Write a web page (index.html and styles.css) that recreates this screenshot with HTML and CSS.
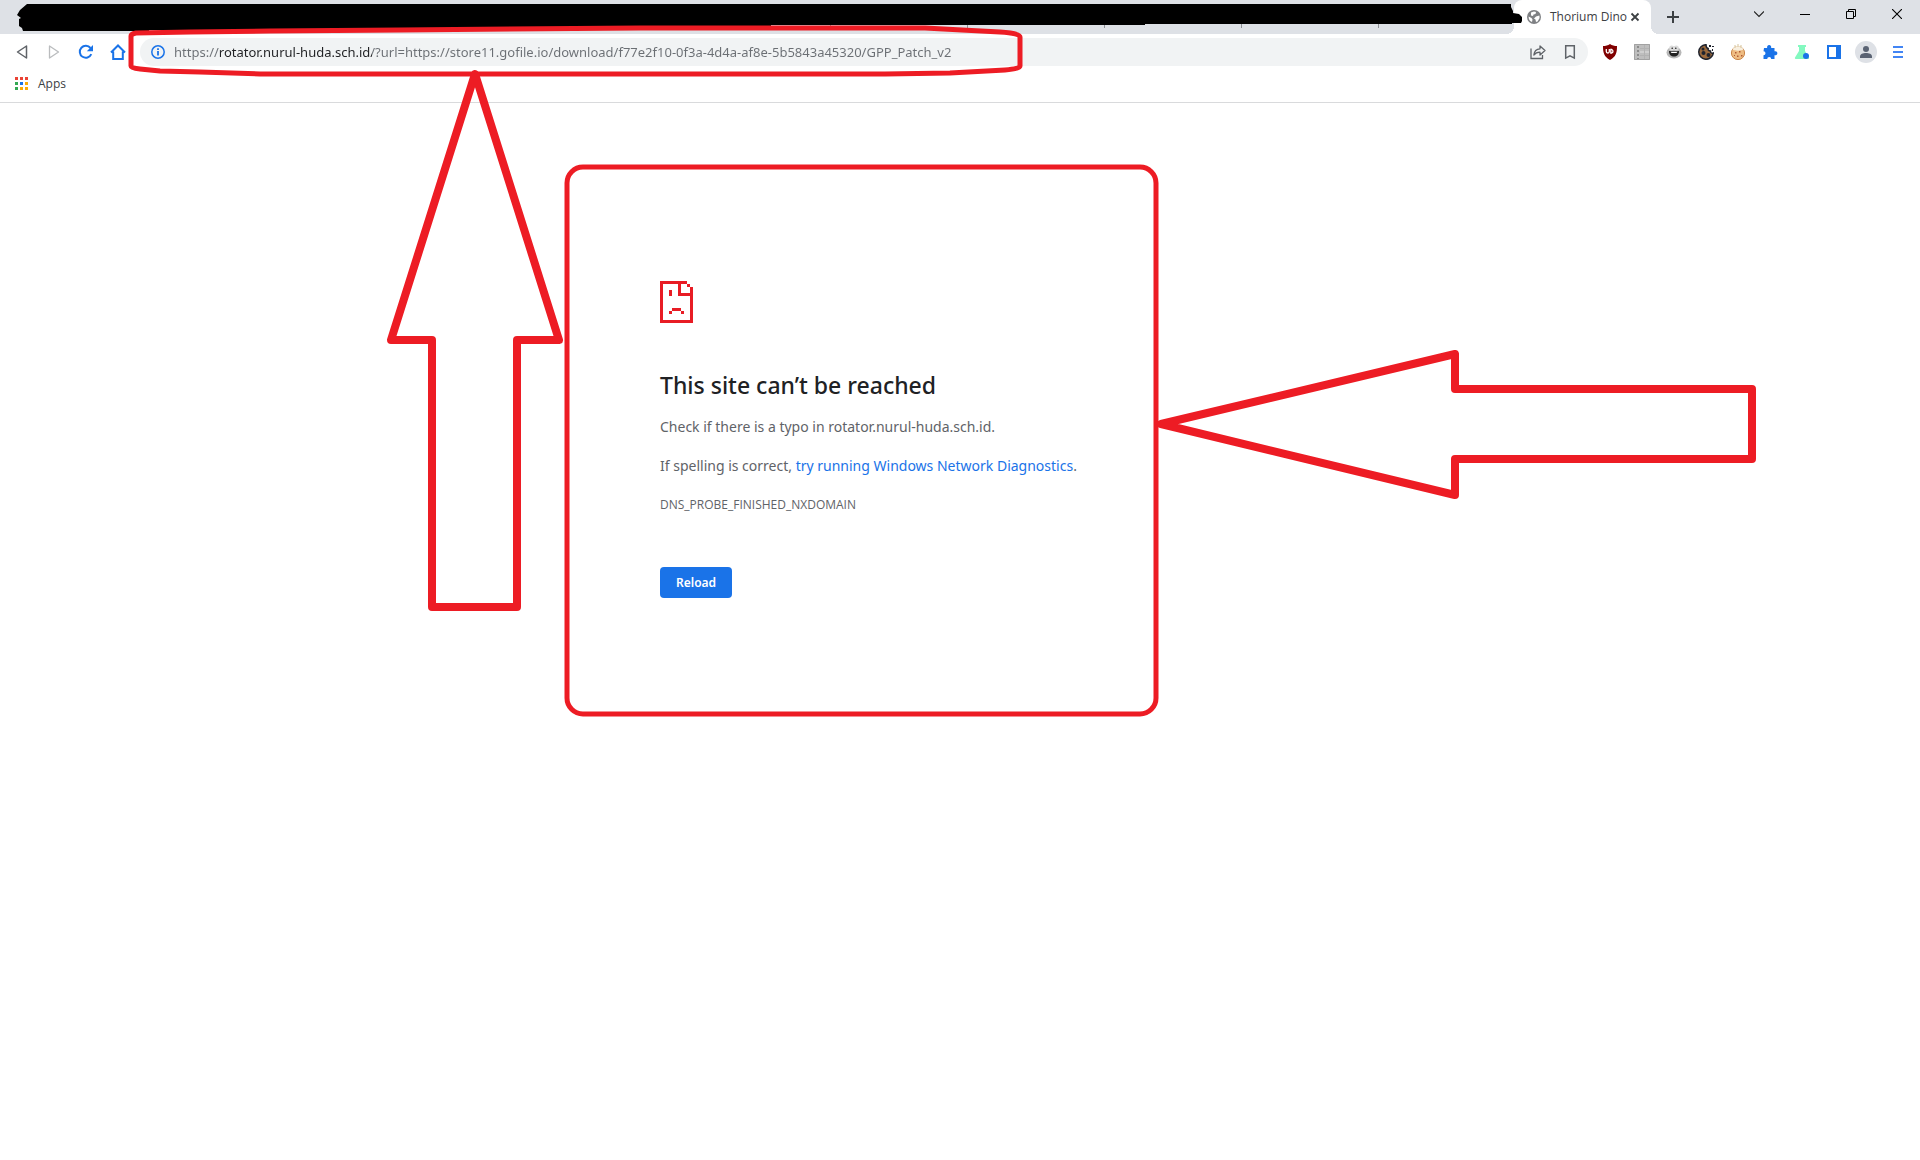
FILE: index.html
```html
<!DOCTYPE html>
<html lang="en">
<head>
<meta charset="utf-8">
<title>Thorium Dino</title>
<link rel="stylesheet" href="styles.css">
</head>
<body>
<div class="window">
  <header class="chrome">
    <div class="tabstrip">
      <div class="hidden-tabs"></div>
      <div class="tab">
        <svg class="i14" viewBox="0 0 14 14"><circle cx="7" cy="7" r="7" fill="#7f8184"/><path d="M1.600 6.500L4.500 8l1 1.500-.5 2.500C3 11.500 1.500 9.500 1.600 6.500zM4 2.500l3-1 2 .5-.5 2-2 .5L6 6 4 5.500zM9 6.500l3.400-1 .2 2.500-2 3.500-1.600.5-.5-2.500-1.500-1z" fill="#fff"/></svg>
        <span class="tab-title">Thorium Dino</span>
        <button class="tab-close" aria-label="Close tab"><svg class="i10" viewBox="0 0 10 10"><path d="M1.500 1.500l7 7M8.500 1.500l-7 7" stroke="#3c4043" stroke-width="1.800"/></svg></button>
      </div>
      <button class="tool new-tab" aria-label="New tab"><svg class="i12" viewBox="0 0 12 12"><path d="M6 0v12M0 6h12" stroke="#3c4043" stroke-width="2"/></svg></button>
      <div class="controls">
        <button aria-label="Search tabs"><svg class="i10" viewBox="0 0 10 10"><path d="M0 2.500l5 5 5-5" fill="none" stroke="#222" stroke-width="1.100"/></svg></button>
        <button aria-label="Minimize"><svg class="i10" viewBox="0 0 10 10"><path d="M0 5.500h10" stroke="#000"/></svg></button>
        <button aria-label="Restore"><svg class="i10" viewBox="0 0 10 10"><path d="M.5 2.500h7v7h-7zM2.500 2.500v-2h7v7h-2" fill="none" stroke="#000"/></svg></button>
        <button aria-label="Close"><svg class="i10" viewBox="0 0 10 10"><path d="M0 0l10 10M10 0L0 10" stroke="#000" stroke-width="1.100"/></svg></button>
      </div>
    </div>
    <div class="toolbar">
      <button class="tool" aria-label="Back"><svg class="i16" viewBox="0 0 16 16"><path d="M12.500 2v12L3.500 8z" fill="none" stroke="#5f6368" stroke-width="1.500" stroke-linejoin="round"/></svg></button>
      <button class="tool" aria-label="Forward"><svg class="i16" viewBox="0 0 16 16"><path d="M3.500 2v12l9-6z" fill="none" stroke="#babcbe" stroke-width="1.300" stroke-linejoin="round"/></svg></button>
      <button class="tool" aria-label="Reload page"><svg class="i16" viewBox="0 0 16 16"><path d="M13.300 10.200A6 6 0 1 1 12.500 4" fill="none" stroke="#1a73e8" stroke-width="2"/><path d="M15 1v6.200H8.800z" fill="#1a73e8"/></svg></button>
      <button class="tool" aria-label="Home"><svg class="i16" viewBox="0 0 16 16"><path d="M1 8.500L8 1.500l7 7M3.200 7.500V15h9.600V7.500" fill="none" stroke="#1a73e8" stroke-width="2"/></svg></button>
      <div class="omnibox">
        <button class="tool" aria-label="View site information"><svg class="i14" viewBox="0 0 14 14"><circle cx="7" cy="7" r="6.200" fill="none" stroke="#1a73e8" stroke-width="1.500"/><path d="M7 3.300v1.600M7 6v4.500" stroke="#1a73e8" stroke-width="1.800"/></svg></button>
        <input class="url" type="text" aria-label="Address" spellcheck="false" value="https://rotator.nurul-huda.sch.id/?url=https://store11.gofile.io/download/f77e2f10-0f3a-4d4a-af8e-5b5843a45320/GPP_Patch_v2">
        <button class="tool" aria-label="Share"><svg class="i16" viewBox="0 0 16 16"><path d="M1 4.500V14.500H12.500V11" fill="none" stroke="#5f6368" stroke-width="1.300"/><path d="M3.800 11C4.300 7 6.300 5 10 4.800V2l5 4.600-5 4.400V8.200C7 8.200 5.300 9 3.800 11z" fill="none" stroke="#5f6368" stroke-width="1.300" stroke-linejoin="round"/></svg></button>
        <button class="tool" aria-label="Bookmark this tab"><svg class="i16" viewBox="0 0 16 16"><path d="M3.700 1.700h8.600v12.400L8 11.800l-4.300 2.300z" fill="none" stroke="#5f6368" stroke-width="1.500"/></svg></button>
      </div>
      <div class="extensions">
        <button class="tool" aria-label="uBlock"><svg class="i16" viewBox="0 0 16 16"><path d="M8 0c2 1.500 4.500 2 7 2 0 7-1 10.500-7 14C2 12.500 1 9 1 2c2.500 0 5-.5 7-2z" fill="#800000"/><path d="M4.300 5v2.500a1.500 1.500 0 0 0 3 0V5M8.800 5.500h1a1.900 1.900 0 0 1 0 3.500h-1z" fill="none" stroke="#fff" stroke-width="1.300"/></svg></button>
        <button class="tool" aria-label="Sheet extension"><svg class="i16" viewBox="0 0 16 16"><path d="M0 0h16v16H0z" fill="#bebebe"/><path d="M.5.5h15v15H.5z" fill="none" stroke="#a2a2a2"/><path d="M4 2v13" stroke="#8c8c8c" stroke-width="2" stroke-dasharray="2 2"/><path d="M6 8h9" stroke="#e0e0e0"/><path d="M6 4.500h9M6 11.500h9M10.500 1v14" stroke="#b2b2b2"/></svg></button>
        <button class="tool" aria-label="Smile extension"><svg class="i16" viewBox="0 0 16 16"><ellipse cx="8" cy="8.500" rx="7.500" ry="6" fill="#b8b8b8"/><circle cx="5.700" cy="4" r="2.500" fill="#dcdcdc"/><circle cx="10.300" cy="4" r="2.500" fill="#dcdcdc"/><circle cx="6.200" cy="4.300" r=".8" fill="#222"/><circle cx="9.800" cy="4.300" r=".8" fill="#222"/><path d="M3 7h10c0 4-2 5.500-5 5.500S3 11 3 7z" fill="#222"/><path d="M4.500 7.700h7L10.500 9h-5z" fill="#fff"/></svg></button>
        <button class="tool" aria-label="Dark cookie"><svg class="i16" viewBox="0 0 16 16"><path d="M8 .7A7.300 7.300 0 1 0 15.300 9c-2 .5-3-.5-2.800-2-2 0-2.700-1-2.300-2.500C8.500 4 8 2.500 8 .7z" fill="#9b6a3c" stroke="#20242e" stroke-width="1.500"/><circle cx="5" cy="5" r="1.500" fill="#20242e"/><circle cx="5.500" cy="9" r="2" fill="#20242e"/><circle cx="10.500" cy="11" r="2" fill="#20242e"/><path d="M11 1h2v2h-2zM14 2h2v1h-2zM14 5h1v2h-1z" fill="#20242e"/></svg></button>
        <button class="tool" aria-label="Cookie"><svg class="i16" viewBox="0 0 16 16"><circle cx="8" cy="9" r="6.600" fill="#eebc82" stroke="#ca8648"/><path d="M2.500 5.500C4 3 5 2 8 2s4 1 5.500 3.500c-3 1.500-8 1.500-11 0z" fill="#f8efdf"/><path d="M5 1v3M8 0v3M11 1v3" stroke="#d6c49c"/><path d="M5 8h1.500v1.500H5zM9 7h1.500v1.500H9zM11 11h1.500v1.500H11zM7 11.500h1.500V13H7zM4 11h1v1H4z" fill="#b05a36"/></svg></button>
        <button class="tool" aria-label="Extensions"><svg class="i16" viewBox="0 0 16 16"><path d="M2 4h3.200a2.100 2.100 0 1 1 3.900 0H12.500v3.300a2.100 2.100 0 1 1 0 3.900V15H9.200a2 2 0 0 0-4 0H1.500v-3.800a2 2 0 0 0 0-4z" fill="#1a73e8"/></svg></button>
        <button class="tool" aria-label="Experiments"><svg class="i16" viewBox="0 0 16 16"><path d="M4 1h8v2h-1v4l4 6.500c.5 1-.3 1.500-1 1.500H2c-.8 0-1.500-.7-1-1.500L5 7V3H4z" fill="#84f9c0"/><circle cx="12" cy="12" r="3" fill="#1a73e8"/></svg></button>
        <button class="tool" aria-label="Side panel"><svg class="i14" viewBox="0 0 14 14"><path d="M0 0h14v14H0zM2 2v10h7V2z" fill="#1a73e8" fill-rule="evenodd"/></svg></button>
        <button class="tool" aria-label="Profile"><svg class="i22" viewBox="0 0 22 22"><circle cx="11" cy="11" r="11" fill="#dee1e6"/><circle cx="11" cy="8" r="3" fill="#5a6373"/><path d="M5 17v-1.500c0-2.500 3-3.500 6-3.500s6 1 6 3.500V17z" fill="#5a6373"/></svg></button>
        <button class="tool" aria-label="Menu"><svg class="i12" viewBox="0 0 12 12"><path d="M1 1h10M1 6h10M1 11h10" stroke="#4285f4" stroke-width="2"/></svg></button>
      </div>
    </div>
    <nav class="bookmarks">
      <a class="bookmark" href="#apps">
        <svg class="apps-icon" viewBox="0 0 13 13"><path d="M0 0h3v3H0zM5 0h3v3H5zM10 0h3v3h-3z" fill="#ea4335"/><path d="M0 5h3v3H0zM0 10h3v3H0z" fill="#34a853"/><path d="M5 5h3v3H5z" fill="#1a73e8"/><path d="M10 5h3v3h-3zM5 10h3v3H5zM10 10h3v3h-3z" fill="#fbab05"/></svg>
        <span>Apps</span>
      </a>
    </nav>
  </header>

  <main class="error-page">
    <svg class="error-icon" viewBox="0 0 11 14" shape-rendering="crispEdges" fill="#e81c24"><path d="M0 0h9v1H1v12h9V2h1v12H0zM9 1h1v1H9zM6 1h1v3h3v1H6zM3 3h1v2H3zM4 9h3v1H4zM3 10h1v1H3zM7 10h1v1H7z"/></svg>
    <h1>This site can’t be reached</h1>
    <p>Check if there is a typo in rotator.nurul-huda.sch.id.</p>
    <p>If spelling is correct, <a href="#diagnostics">try running Windows Network Diagnostics</a>.</p>
    <div class="error-code">DNS_PROBE_FINISHED_NXDOMAIN</div>
    <button class="reload">Reload</button>
  </main>

  <svg class="markup" width="1920" height="760" viewBox="0 0 1920 760" aria-hidden="true">
    <path d="M830.500 24v4M967.500 24v4M1104.500 24v4M1241.500 24v4M1378.500 24v4" stroke="#8e9196"/>
    <path d="M27 4H1511v3l2 4v2l6 1 3 3v4l-1 2h-9v1H1145v1H771v1H645v1H521v1H397v1H273v1H149v1H23l-1-3-3-2V19l2-1-4-3 3-5z"/>
    <g fill="none" stroke="#ed1c24" stroke-linejoin="round">
      <path d="M131 36q0-2 5-3L190 32 270 31 400 30 640 28 770 28 925 28 962 30 1000 32q20 1 20 5V66q0 3-15 4L950 73 885 74H260L200 72 160 71 140 69q-9-1-9-3z" stroke-width="5"/>
      <rect x="567" y="167" width="589" height="547" rx="16" stroke-width="5"/>
      <path d="M475 74L559 340H517V607H432V340H391z" stroke-width="8"/>
      <path d="M1161 424L1455 354V389H1752V459H1455V495z" stroke-width="8"/>
    </g>
  </svg>
</div>
</body>
</html>
```
FILE: styles.css
```css
* { box-sizing: border-box; }

body {
  margin: 0;
  background: #fff;
  color: #5f6368;
  font-family: "Noto Sans", "Open Sans", sans-serif;
}

button {
  border: 0;
  padding: 0;
  background: none;
  font-family: inherit;
  color: inherit;
}

svg { display: block; }
.i10 { width: 10px; height: 10px; }
.i12 { width: 12px; height: 12px; }
.i14 { width: 14px; height: 14px; }
.i16 { width: 16px; height: 16px; }
.i22 { width: 22px; height: 22px; }

.window {
  position: relative;
  min-height: 100vh;
  overflow: hidden;
}

.chrome { border-bottom: 1px solid #d9dadc; }

.tabstrip {
  display: flex;
  height: 34px;
  background: #dee1e6;
}

.hidden-tabs { flex: 1; }

.tab {
  position: relative;
  display: flex;
  align-items: center;
  width: 137px;
  padding: 0 11px 0 13px;
  border-radius: 8px 8px 0 0;
  background: #fff;
  color: #3c4043;
}

/* flared feet of the active tab */
.tab::before,
.tab::after {
  content: "";
  position: absolute;
  bottom: 0;
  width: 8px;
  height: 8px;
}
.tab::before {
  right: 100%;
  background: radial-gradient(circle at 0 0, transparent 8px, #fff 8px);
}
.tab::after {
  left: 100%;
  background: radial-gradient(circle at 100% 0, transparent 8px, #fff 8px);
}

.tab-title {
  flex: 1;
  min-width: 0;
  margin-left: 9px;
  font-family: "Open Sans", "Noto Sans", sans-serif;
  font-size: 12px;
  line-height: 16px;
  white-space: nowrap;
}

.tool {
  display: grid;
  flex: none;
  place-items: center;
  width: 28px;
  height: 28px;
}

.new-tab { margin: 3px 49px 0 8px; }

.controls { display: flex; }
.controls button {
  display: grid;
  place-items: center;
  width: 46px;
  height: 28px;
}

.toolbar {
  display: flex;
  align-items: center;
  gap: 4px;
  padding: 4px 8px;
}

.omnibox {
  display: flex;
  flex: 1;
  gap: 4px;
  margin: 0 4px;
  padding: 0 4px;
  border-radius: 14px;
  background: #f1f3f4;
}

/* scheme and path are grey, the host name is dark */
.url {
  flex: 1;
  min-width: 0;
  height: 28px;
  margin-left: -2px;
  padding: 0;
  border: 0;
  outline: 0;
  background: linear-gradient(90deg, #6b6f74 46px, #202124 46px 198px, #6b6f74 198px);
  -webkit-background-clip: text;
  background-clip: text;
  color: transparent;
  font: 13px "Noto Sans", "Open Sans", sans-serif;
}

.extensions {
  display: flex;
  gap: 4px;
}

.bookmarks {
  display: flex;
  height: 32px;
  padding: 0 15px 5px;
}

.bookmark {
  display: flex;
  align-items: center;
  gap: 10px;
  color: #3c4043;
  font-family: "Open Sans", "Noto Sans", sans-serif;
  font-size: 12px;
  text-decoration: none;
}

.apps-icon { width: 13px; height: 13px; }

.error-page {
  max-width: 600px;
  margin: 0 auto;
  padding-top: 178px;
  font-size: 14px;
  line-height: 24px;
}

.error-icon {
  width: 33px;
  height: 42px;
  margin-bottom: 46px;
}

h1 {
  margin: 0 0 14px;
  color: #202124;
  font-size: 23px;
  font-weight: 500;
  line-height: 32px;
}

p { margin: 0 0 15px; }

a { color: #1a73e8; text-decoration: none; }

.error-code {
  font-family: "Open Sans", "Noto Sans", sans-serif;
  font-size: 12px;
  line-height: 24px;
}

.reload {
  margin-top: 50px;
  padding: 0 16px;
  border-radius: 4px;
  background: #1a73e8;
  color: #fff;
  font-size: 12px;
  font-weight: 600;
  line-height: 31px;
}

.markup {
  position: absolute;
  top: 0;
  left: 0;
  pointer-events: none;
}
```
